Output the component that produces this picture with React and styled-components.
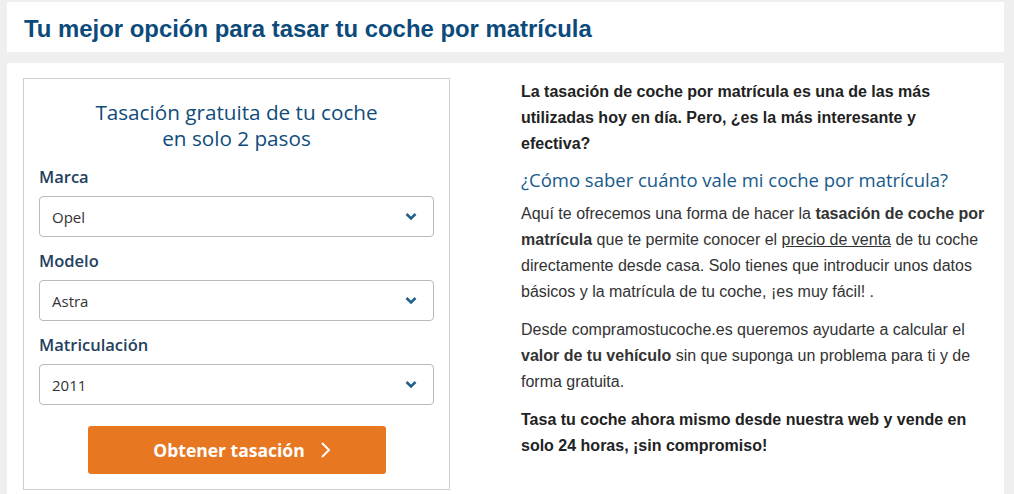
import styled, { createGlobalStyle } from "styled-components";

const GlobalStyle = createGlobalStyle`
  html, body {
    margin: 0;
    padding: 0;
    background: #efefef;
  }
  body {
    font-family: "Liberation Sans", Arial, sans-serif;
  }
`;

const Page = styled.div`
  padding: 2px 10px 0 7px;
  display: flex;
  flex-direction: column;
  gap: 11px;
`;

const Header = styled.header`
  background: #fff;
  height: 50px;
  box-sizing: border-box;
  display: flex;
  align-items: center;
  padding: 4px 0 0 17px;
`;

const Title = styled.h1`
  margin: 0;
  font-family: "Liberation Sans", Arial, sans-serif;
  font-size: 23.9px;
  font-weight: 700;
  color: #0c4a7c;
`;

const Main = styled.main`
  background: #fff;
  display: flex;
  padding: 15px 0 6px 16px;
  min-height: 410px;
`;

const Card = styled.section`
  width: 427px;
  box-sizing: border-box;
  border: 1px solid #cfcfcf;
  padding: 20px 15px 15px 15px;
  display: flex;
  flex-direction: column;
  font-family: "Open Sans", sans-serif;
`;

const CardTitle = styled.h2`
  margin: 0 0 15px;
  text-align: center;
  font-size: 20.7px;
  font-weight: 400;
  line-height: 26px;
  color: #0f4c7b;
`;

const Label = styled.label`
  display: block;
  font-size: 16.5px;
  font-weight: 600;
  color: #24405e;
  line-height: 22px;
  margin-bottom: 8px;
`;

const Field = styled.div`
  margin-bottom: 13px;
`;

const Select = styled.div`
  height: 41px;
  box-sizing: border-box;
  border: 1px solid #b9b9b9;
  border-radius: 4px;
  display: flex;
  align-items: center;
  justify-content: space-between;
  padding: 0 16px 0 12px;
  font-size: 15px;
  color: #333;
`;

const Button = styled.button`
  align-self: center;
  width: 298px;
  height: 48px;
  margin-top: 8px;
  border: none;
  border-radius: 3px;
  background: #e87722;
  color: #fff;
  font-family: "Open Sans", sans-serif;
  font-size: 17.5px;
  font-weight: 700;
  display: flex;
  align-items: center;
  justify-content: center;
  gap: 15px;
  padding: 0 0 0 11px;
`;

const Text = styled.article`
  width: 466px;
  margin-left: 71px;
  padding-top: 1px;
  font-family: "Liberation Sans", Arial, sans-serif;
  font-size: 16px;
  line-height: 26px;
  color: #333;
`;

const P = styled.p`
  margin: 0 0 ${(p) => p.$mb || 12}px;
  font-weight: ${(p) => (p.$bold ? 700 : 400)};
  color: ${(p) => (p.$bold ? "#222" : "#333")};
`;

const SubTitle = styled.h3`
  margin: 0 0 6px;
  font-family: "Open Sans", sans-serif;
  font-size: 18.5px;
  font-weight: 400;
  line-height: 30px;
  color: #185a8b;
`;

const Link = styled.a`
  color: #333;
  text-decoration: underline;
`;

const Chevron = () => (
  <svg width="12" height="9" viewBox="0 0 12 9">
    <path d="M1.5 2 L6 6.5 L10.5 2" fill="none" stroke="#24618f" strokeWidth="2.6" />
  </svg>
);

const Arrow = () => (
  <svg width="11" height="18" viewBox="0 0 11 18">
    <path d="M2 2 L9 9 L2 16" fill="none" stroke="#fff" strokeWidth="2" />
  </svg>
);

const fields = [
  { label: "Marca", value: "Opel" },
  { label: "Modelo", value: "Astra" },
  { label: "Matriculación", value: "2011" },
];

export default function App() {
  return (
    <>
      <GlobalStyle />
      <Page>
        <Header>
          <Title>Tu mejor opción para tasar tu coche por matrícula</Title>
        </Header>
        <Main>
          <Card>
            <CardTitle>
              Tasación gratuita de tu coche
              <br />
              en solo 2 pasos
            </CardTitle>
            {fields.map((f) => (
              <Field key={f.label}>
                <Label>{f.label}</Label>
                <Select>
                  <span>{f.value}</span>
                  <Chevron />
                </Select>
              </Field>
            ))}
            <Button>
              Obtener tasación
              <Arrow />
            </Button>
          </Card>
          <Text>
            <P $bold $mb={8}>
              La tasación de coche por matrícula es una de las más utilizadas hoy en día. Pero, ¿es la más interesante y efectiva?
            </P>
            <SubTitle>¿Cómo saber cuánto vale mi coche por matrícula?</SubTitle>
            <P>
              Aquí te ofrecemos una forma de hacer la <b>tasación de coche por matrícula</b> que te permite
              conocer el <Link>precio de venta</Link> de tu coche directamente desde casa. Solo tienes que
              introducir unos datos básicos y la matrícula de tu coche, ¡es muy fácil! .
            </P>
            <P>
              Desde compramostucoche.es queremos ayudarte a calcular el <b>valor de tu vehículo</b> sin que
              suponga un problema para ti y de forma gratuita.
            </P>
            <P $bold>
              Tasa tu coche ahora mismo desde nuestra web y vende en solo 24 horas, ¡sin compromiso!
            </P>
          </Text>
        </Main>
      </Page>
    </>
  );
}
